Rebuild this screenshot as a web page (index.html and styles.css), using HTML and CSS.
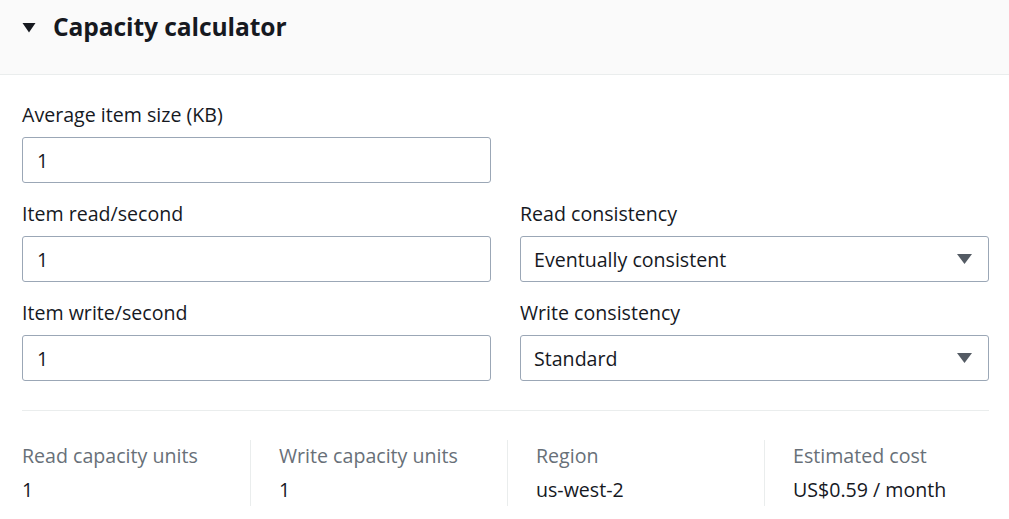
FILE: index.html
```html
<!DOCTYPE html>
<html>
<head>
<meta charset="utf-8">
<link rel="stylesheet" href="styles.css">
</head>
<body>
<div class="panel">
  <div class="header">
    <svg class="caret" width="14" height="11" viewBox="0 0 14 11"><polygon points="0.5,1 13.5,1 7,10.5" fill="#16191f"/></svg>
    <h2 class="title">Capacity calculator</h2>
  </div>
  <div class="body">
    <div class="form">
      <div class="field">
        <label class="label">Average item size (KB)</label>
        <div class="input">1</div>
      </div>
      <div class="empty"></div>
      <div class="field">
        <label class="label">Item read/second</label>
        <div class="input">1</div>
      </div>
      <div class="field">
        <label class="label">Read consistency</label>
        <div class="input select"><span>Eventually consistent</span><svg class="arrow" width="15" height="10" viewBox="0 0 15 10"><polygon points="0,0 15,0 7.5,10" fill="#545b64"/></svg></div>
      </div>
      <div class="field">
        <label class="label">Item write/second</label>
        <div class="input">1</div>
      </div>
      <div class="field">
        <label class="label">Write consistency</label>
        <div class="input select"><span>Standard</span><svg class="arrow" width="15" height="10" viewBox="0 0 15 10"><polygon points="0,0 15,0 7.5,10" fill="#545b64"/></svg></div>
      </div>
    </div>
    <div class="divider"></div>
    <div class="stats">
      <div class="stat"><div class="stat-label">Read capacity units</div><div class="stat-value">1</div></div>
      <div class="stat"><div class="stat-label">Write capacity units</div><div class="stat-value">1</div></div>
      <div class="stat"><div class="stat-label">Region</div><div class="stat-value">us-west-2</div></div>
      <div class="stat"><div class="stat-label">Estimated cost</div><div class="stat-value">US$0.59 / month</div></div>
    </div>
  </div>
</div>
</body>
</html>
```
FILE: styles.css
```css
html, body {
  margin: 0;
  padding: 0;
  background: #ffffff;
  overflow: hidden;
}
body {
  font-family: "Open Sans", "Noto Sans", sans-serif;
  color: #16191f;
  font-size: 19.6px;
}
.panel {
  width: 1009px;
}
.header {
  height: 74px;
  background: #fafafa;
  border-bottom: 1px solid #eaeded;
  display: flex;
  align-items: center;
  padding-left: 22px;
}
.caret {
  margin-right: 17px;
  margin-top: -20px;
}
.title {
  margin: 0;
  font-size: 24.6px;
  font-weight: 700;
  line-height: 30px;
  margin-top: -20px;
  letter-spacing: -0.1px;
}
.body {
  padding: 29px 20px 0 22px;
}
.form {
  display: grid;
  grid-template-columns: 1fr 1fr;
  column-gap: 29px;
  row-gap: 20px;
}
.field {
  display: flex;
  flex-direction: column;
}
.label {
  line-height: 22px;
  margin-bottom: 11px;
}
.input {
  height: 46px;
  box-sizing: border-box;
  border: 1px solid #9ba7b6;
  border-radius: 3px;
  padding: 0 14px;
  display: flex;
  align-items: center;
  justify-content: space-between;
}
.select {
  padding-left: 13px;
}
.arrow {
  margin-right: 2px;
}
.divider {
  height: 1px;
  background: #eaeded;
  margin-top: 29px;
}
.stats {
  display: grid;
  grid-template-columns: repeat(4, 257px);
  margin-left: -29px;
  margin-top: 29px;
}
.stat {
  border-left: 1px solid #eaeded;
  padding-left: 28px;
  padding-top: 4px;
  height: 66px;
  box-sizing: border-box;
}
.stat-label {
  color: #687078;
  line-height: 24px;
}
.stat-value {
  line-height: 24px;
  margin-top: 10px;
}
```
